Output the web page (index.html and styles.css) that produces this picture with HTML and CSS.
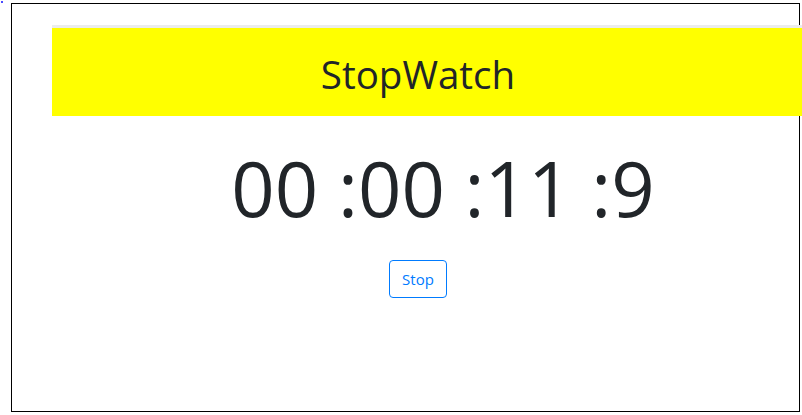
FILE: index.html
```html
<!DOCTYPE html>
<html>
<head>
<meta charset="utf-8">
<link rel="stylesheet" href="styles.css">
</head>
<body>
<span class="dot"></span>
<div class="frame">
  <div class="content">
    <div class="band"><h1 class="title">StopWatch</h1></div>
    <div class="timer">00 :00 :11 :9</div>
    <div class="actions"><button class="btn">Stop</button></div>
  </div>
</div>
</body>
</html>
```
FILE: styles.css
```css
html, body {
  margin: 0;
  padding: 0;
  overflow: hidden;
  background: #fff;
}
body {
  font-family: "Open Sans", "Noto Sans", sans-serif;
  color: #212529;
}
.dot {
  position: absolute;
  left: 1px;
  top: 1px;
  width: 2px;
  height: 2px;
  background: #4b4bff;
}
.frame {
  margin: 3px 0 0 11px;
  width: 787px;
  height: 407px;
  border: 1px solid #000;
}
.content {
  margin: 21px 15px 0 40px;
}
.band {
  margin-right: -18px;
  border-top: 3px solid #ececec;
  background: #ffff00;
  height: 88px;
  display: flex;
  align-items: center;
  justify-content: center;
  padding-right: 18px;
}
.title {
  margin: 4px 0 0;
  font-size: 38.5px;
  font-weight: 400;
  line-height: 48px;
}
.timer {
  margin-top: 20px;
  padding-left: 50px;
  text-align: center;
  font-size: 76px;
  line-height: 104px;
}
.actions {
  margin-top: 20px;
  display: flex;
  justify-content: center;
}
.btn {
  font-family: inherit;
  font-size: 15px;
  line-height: 24px;
  padding: 6px 12px;
  border: 1px solid #007bff;
  border-radius: 4px;
  background: #fff;
  color: #007bff;
}
```
